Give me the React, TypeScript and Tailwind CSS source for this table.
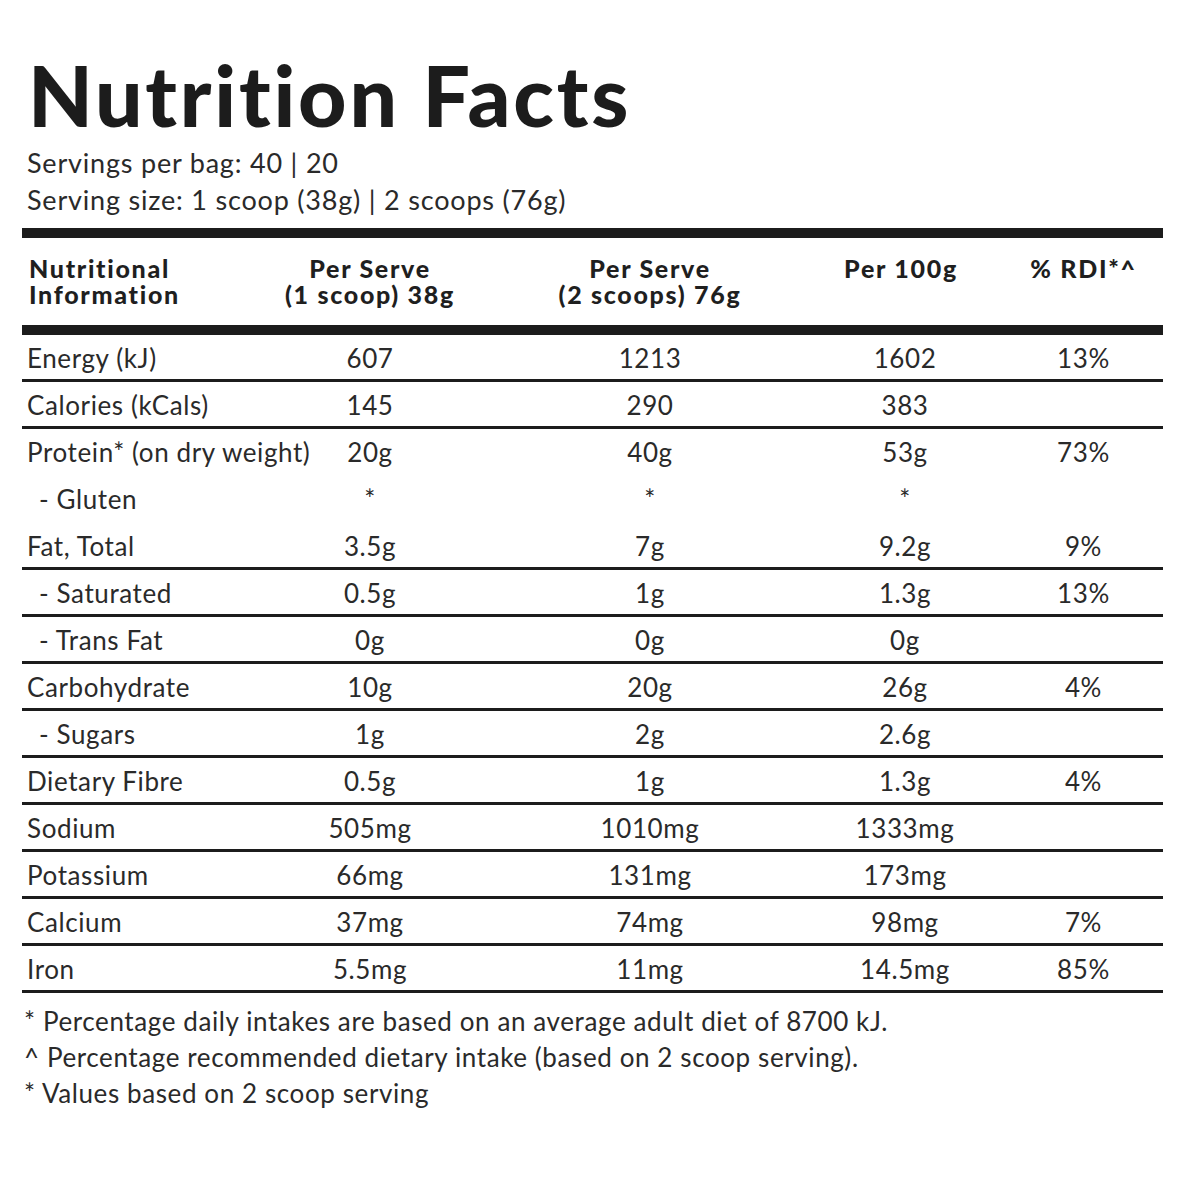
import React from 'react';

type Row = {
  label: string;
  one: string;
  two: string;
  per100: string;
  rdi: string;
  indent?: boolean;
  line?: boolean;
};

const rows: Row[] = [
  { label: 'Energy (kJ)', one: '607', two: '1213', per100: '1602', rdi: '13%', line: true },
  { label: 'Calories (kCals)', one: '145', two: '290', per100: '383', rdi: '', line: true },
  { label: 'Protein* (on dry weight)', one: '20g', two: '40g', per100: '53g', rdi: '73%' },
  { label: '- Gluten', one: '*', two: '*', per100: '*', rdi: '', indent: true },
  { label: 'Fat, Total', one: '3.5g', two: '7g', per100: '9.2g', rdi: '9%', line: true },
  { label: '- Saturated', one: '0.5g', two: '1g', per100: '1.3g', rdi: '13%', indent: true, line: true },
  { label: '- Trans Fat', one: '0g', two: '0g', per100: '0g', rdi: '', indent: true, line: true },
  { label: 'Carbohydrate', one: '10g', two: '20g', per100: '26g', rdi: '4%', line: true },
  { label: '- Sugars', one: '1g', two: '2g', per100: '2.6g', rdi: '', indent: true, line: true },
  { label: 'Dietary Fibre', one: '0.5g', two: '1g', per100: '1.3g', rdi: '4%', line: true },
  { label: 'Sodium', one: '505mg', two: '1010mg', per100: '1333mg', rdi: '', line: true },
  { label: 'Potassium', one: '66mg', two: '131mg', per100: '173mg', rdi: '', line: true },
  { label: 'Calcium', one: '37mg', two: '74mg', per100: '98mg', rdi: '7%', line: true },
  { label: 'Iron', one: '5.5mg', two: '11mg', per100: '14.5mg', rdi: '85%', line: true },
];

const grid = 'grid grid-cols-[248px_200px_360px_150px_183px]';

const App = (): React.JSX.Element => {
  return (
    <div className="h-[1200px] w-[1200px] bg-white font-['Lato',sans-serif] text-[#2a2a2a]">
      <div className="pl-[22px] pt-[47px]">
        {/* Title */}
        <h1 className="pl-[6px] text-[84px] font-black leading-[96px] tracking-[2.8px] text-[#1c1c1c]">
          Nutrition Facts
        </h1>
        <div className="mt-[1px] pl-[5px] text-[27px] leading-[37px] tracking-[0.8px]">
          <p>Servings per bag: 40 | 20</p>
          <p>Serving size: 1 scoop (38g) | 2 scoops (76g)</p>
        </div>

        {/* Table */}
        <div className="mt-[10px] w-[1141px]">
          <div className="h-[10px] bg-[#1c1c1c]" />
          <div className={`${grid} h-[87px] pt-[17px] text-[25px] font-black leading-[26px] tracking-[1.7px] text-[#1f1f1f]`}>
            <div className="pl-[7px]">
              <p>Nutritional</p>
              <p>Information</p>
            </div>
            <div className="text-center">
              <p>Per Serve</p>
              <p>(1 scoop) 38g</p>
            </div>
            <div className="text-center">
              <p>Per Serve</p>
              <p>(2 scoops) 76g</p>
            </div>
            <div className="pr-[8px] text-center">
              <p>Per 100g</p>
            </div>
            <div className="pl-[24px] text-center">
              <p>% RDI*^</p>
            </div>
          </div>
          <div className="h-[10px] bg-[#1c1c1c]" />

          {rows.map((row) => (
            <div
              key={row.label}
              className={`${grid} h-[47px] items-center pt-[1px] text-[26px] leading-none tracking-[0.6px] ${
                row.line ? 'border-b-[3px] border-[#1c1c1c]' : 'border-b-[3px] border-transparent'
              }`}
            >
              <div className={`whitespace-nowrap ${row.indent ? 'pl-[17px]' : 'pl-[5px]'}`}>{row.label}</div>
              <div className="text-center">{row.one}</div>
              <div className="text-center">{row.two}</div>
              <div className="text-center">{row.per100}</div>
              <div className="pl-[24px] text-center">{row.rdi}</div>
            </div>
          ))}
        </div>

        {/* Footnotes */}
        <div className="mt-[10px] pl-[2px] text-[26px] leading-[36px] tracking-[0.6px]">
          <p>* Percentage daily intakes are based on an average adult diet of 8700 kJ.</p>
          <p>^ Percentage recommended dietary intake (based on 2 scoop serving).</p>
          <p>* Values based on 2 scoop serving</p>
        </div>
      </div>
    </div>
  );
};

export default App;
